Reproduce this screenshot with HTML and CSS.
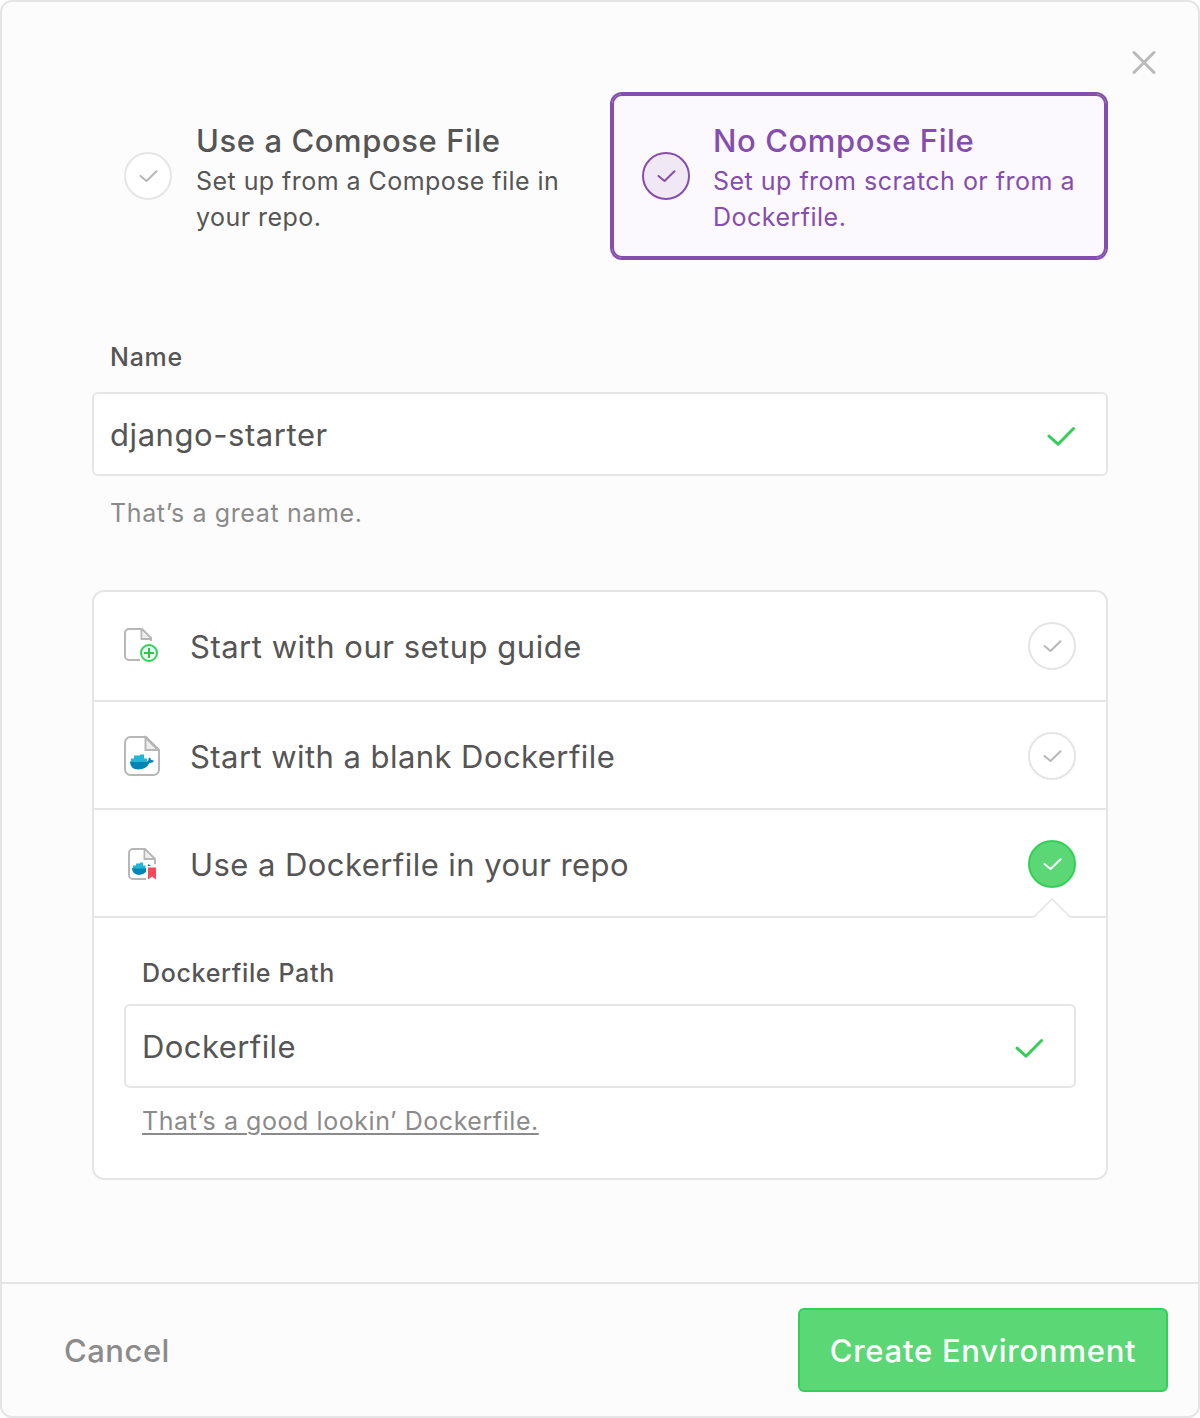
FILE: index.html
```html
<!DOCTYPE html>
<html lang="en">
<head>
<meta charset="utf-8">
<title>Create Environment</title>
<link rel="stylesheet" href="styles.css">
</head>
<body>
<svg class="defs" aria-hidden="true">
  <symbol id="tick-small" viewBox="0 0 20 14"><path d="M2.500 7 8.500 12 18.500 2.200" fill="none" stroke="currentColor" stroke-width="2" stroke-linecap="round" stroke-linejoin="round"/></symbol>
  <symbol id="tick-large" viewBox="0 0 28 20"><path d="M2 10.200 11 18.200 26.500 2.500" fill="none" stroke="currentColor" stroke-width="3" stroke-linecap="round" stroke-linejoin="round"/></symbol>
</svg>
<main class="modal">
  <div class="content">
    <button class="close" aria-label="Close"><svg width="24" height="24" viewBox="0 0 24 24"><path d="M2 2.500 22 22.500M22 2.500 2 22.500" stroke="#bababa" stroke-width="3" stroke-linecap="round"/></svg></button>
    <section class="choices">
      <div class="choice">
        <span class="radio"><svg class="tick"><use href="#tick-small"/></svg></span>
        <div class="choice-text">
          <h2 class="choice-title">Use a Compose File</h2>
          <p class="choice-copy">Set up from a Compose file in<br>your repo.</p>
        </div>
      </div>
      <div class="choice choice-selected">
        <span class="radio radio-purple"><svg class="tick"><use href="#tick-small"/></svg></span>
        <div class="choice-text">
          <h2 class="choice-title">No Compose File</h2>
          <p class="choice-copy">Set up from scratch or from a<br>Dockerfile.</p>
        </div>
      </div>
    </section>
    <section class="name-field">
      <div class="label">Name</div>
      <div class="input"><span class="large-text value-name">django-starter</span><svg class="valid"><use href="#tick-large"/></svg></div>
      <p class="hint hint-name">That’s a great name.</p>
    </section>
    <section class="options">
      <div class="option option-first">
        <svg class="file-icon" width="36" height="42" viewBox="0 0 36 42">
          <path d="M16 35H5a4 4 0 0 1-4-4V8a4 4 0 0 1 4-4H18L27 13V16M17.500 4V14H27" fill="none" stroke="#b7b7b7" stroke-width="2"/>
          <path d="M18.500 6.500V13H25Z" fill="#ececec"/>
          <circle cx="25" cy="28" r="8" fill="#eefcf1" stroke="#33d058" stroke-width="2"/>
          <path d="M20 28H30M25 23V33" stroke="#27c74c" stroke-width="2"/>
        </svg>
        <span class="large-text option-label option-guide">Start with our setup guide</span>
        <span class="radio"><svg class="tick"><use href="#tick-small"/></svg></span>
      </div>
      <div class="option">
        <svg class="file-icon" width="36" height="42" viewBox="0 0 36 42">
          <path d="M6.500 2H22L35 15V34.500a5.500 5.500 0 0 1-5.500 5.500H6.500A5.500 5.500 0 0 1 1 34.500V7.500A5.500 5.500 0 0 1 6.500 2Z" fill="#fff" stroke="#b7b7b7" stroke-width="2"/>
          <path d="M21.500 2.500V15H34Z" fill="#eee" stroke="#b7b7b7" stroke-width="2"/>
          <path d="M6 26.500H22.500Q25 26.500 24.500 23.500L25.500 22.500Q27 23.500 27.200 25L30 25.500Q29 28 25.500 28 22 34.500 14.500 34.500 6 34.500 6 26.500Z" fill="#0085b5"/>
          <path d="M7 27V23.500H10V20.500H16V19.500H20V23.500H23V27Z" fill="#21b5d6"/>
        </svg>
        <span class="large-text option-label">Start with a blank Dockerfile</span>
        <span class="radio"><svg class="tick"><use href="#tick-small"/></svg></span>
      </div>
      <div class="option option-open">
        <svg class="file-icon" width="36" height="42" viewBox="0 0 36 42">
          <path d="M22 36H9a4 4 0 0 1-4-4V10a4 4 0 0 1 4-4H21L31 16V21M20.500 6V16H31" fill="none" stroke="#b7b7b7" stroke-width="2"/>
          <path d="M21.500 8.500V15H28Z" fill="#eee"/>
          <path d="M8 25H22V29Q19 32 15 32 8 31 8 25ZM24.500 21 26.500 22.500V23H23.500Z" fill="#0085b5"/>
          <path d="M9 25.500V22.500H12V20.500H16V19.500H19V22.500H21.500V25.500Z" fill="#21b5d6"/>
          <path d="M24 24.500H32V36.500L28 33.500 24 36.500Z" fill="#f6495c"/>
        </svg>
        <span class="large-text option-label">Use a Dockerfile in your repo</span>
        <span class="radio radio-green"><svg class="tick"><use href="#tick-small"/></svg></span>
        <svg class="notch" width="38" height="21" viewBox="0 0 38 21"><path d="M0 19 1 19 19 1 37 19H38V21H0Z" fill="#fff"/><path d="M0 19H1L19 1 37 19H38" fill="none" stroke="#e5e5e5" stroke-width="1.500"/></svg>
      </div>
      <div class="details">
        <div class="label label-path">Dockerfile Path</div>
        <div class="input"><span class="large-text value-path">Dockerfile</span><svg class="valid"><use href="#tick-large"/></svg></div>
        <a class="hint hint-path">That’s a good lookin’ Dockerfile.</a>
      </div>
    </section>
  </div>
  <footer class="footer">
    <button class="cancel large-text">Cancel</button>
    <button class="create large-text">Create Environment</button>
  </footer>
</main>
</body>
</html>
```
FILE: styles.css
```css
* { box-sizing: border-box; }
body { margin: 0; background: #fff; color: #555; font-family: Inter, "Noto Sans", sans-serif; }
h2, p { margin: 0; }
button { padding: 0; border: 0; background: none; font-family: inherit; }
svg { display: block; flex: none; }
.defs { display: none; }
.modal { width: 1200px; height: 1418px; display: flex; flex-direction: column; background: #fcfcfc; border: 2px solid #e5e5e5; border-radius: 12px; overflow: hidden; }
.content { flex: 1; position: relative; padding: 90px 90px 0; }
.close { position: absolute; top: 48px; right: 42px; }
.choices { display: grid; grid-template-columns: repeat(2, minmax(0, 1fr)); gap: 20px; }
.choice { height: 168px; display: flex; align-items: center; gap: 24px; padding: 0 30px; border: 2px solid transparent; border-radius: 12px; }
.choice-selected { color: #844dae; border-color: #844dae; background: #fbf9fd; box-shadow: inset 0 0 0 2px #844dae; }
.choice-selected .choice-text { margin-left: -1px; }
.radio { width: 48px; height: 48px; flex: none; display: grid; place-items: center; border: 2px solid #e5e5e5; border-radius: 50%; background: #fff; color: #b7b7b7; }
.radio-purple { color: #844dae; border-color: #844dae; background: #f0e9f5; }
.radio-green { color: #fff; border-color: #33d058; background: #5bd775; }
.tick { width: 20px; height: 14px; }
.choice-text { white-space: nowrap; }
.choice-title { font-size: 31px; font-weight: 500; line-height: 40px; letter-spacing: 0.58px; padding-top: 4px; margin-bottom: 2px; }
.choice-copy { font-size: 25px; line-height: 36px; letter-spacing: 0.45px; }
.choice-selected .choice-copy { letter-spacing: 0.49px; }
.name-field { margin-top: 80px; }
.label { font-size: 25px; font-weight: 500; line-height: 34px; letter-spacing: 0.75px; margin-left: 18px; }
.label-path { letter-spacing: 0.66px; }
.input { height: 84px; display: flex; align-items: center; justify-content: space-between; padding: 0 31px 0 16px; border: 2px solid #e5e5e5; border-radius: 6px; background: #fff; }
.name-field .input { margin-top: 18px; }
.large-text { font-size: 31px; line-height: 40px; letter-spacing: 0.57px; padding-top: 2px; white-space: nowrap; }
.value-path { letter-spacing: 0.42px; }
.valid { width: 28px; height: 20px; color: #33d058; margin-top: 4px; }
.hint { display: block; color: #8b8b8b; font-size: 25px; line-height: 34px; letter-spacing: 0.63px; margin: 20px 0 0 18px; }
.options { margin-top: 60px; height: 590px; background: #fff; border: 2px solid #e5e5e5; border-radius: 12px; }
.option { position: relative; height: 108px; display: flex; align-items: center; padding: 2px 30px 0; border-bottom: 2px solid #e5e5e5; }
.option-first { height: 110px; padding-top: 0; }
.option-label { flex: 1; margin-left: 30px; letter-spacing: 0.44px; }
.option-guide { letter-spacing: 0.51px; }
.notch { position: absolute; right: 35px; bottom: -3px; }
.details { padding: 38px 30px 0; }
.details .input { margin-top: 14px; }
.details .hint { margin-top: 16px; letter-spacing: 0.56px; text-decoration: underline; text-decoration-thickness: 2px; text-underline-offset: 3px; }
.footer { height: 134px; display: flex; align-items: center; justify-content: space-between; padding: 0 30px 0 62px; border-top: 2px solid #e5e5e5; }
.cancel { color: #8b8b8b; font-weight: 500; letter-spacing: 0.5px; }
.create { width: 370px; height: 84px; color: #fff; font-weight: 500; letter-spacing: 0.75px; border: 2px solid #33d058; border-radius: 6px; background: #5bd775; }
```
